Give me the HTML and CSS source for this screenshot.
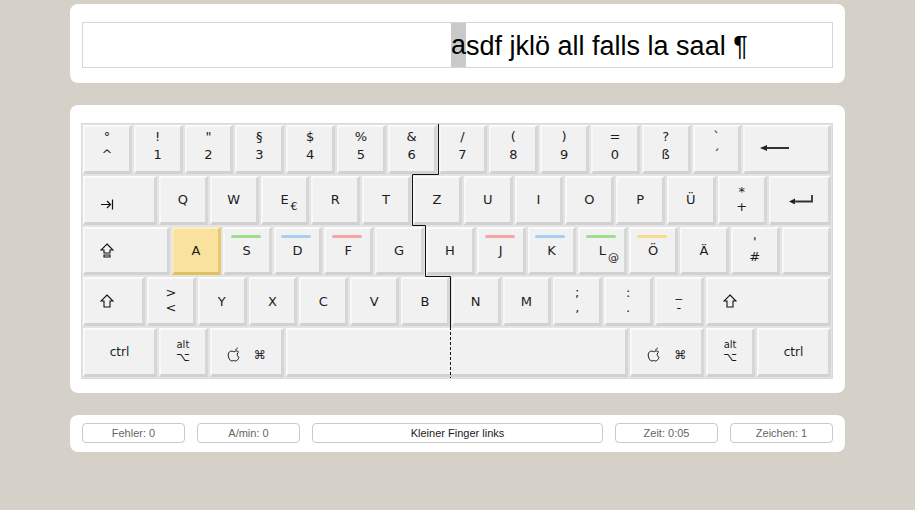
FILE: index.html
```html
<!doctype html>
<html lang="de">
 <head>
  <meta charset="UTF-8">
  <title>Tipptrainer</title>
  <link rel="stylesheet" href="styles.css">
 </head>
 <body>
  <div class="page">
   <div class="panel panel-text">
    <div class="textline"><span class="cur">a</span>sdf jklö all falls la saal ¶</div>
   </div>

   <div class="panel panel-kb">
    <div class="kb">
     <div class="row">
      <div class="key dbl num"><span>°</span><span>^</span></div>
      <div class="key dbl num"><span>!</span><span>1</span></div>
      <div class="key dbl num"><span>"</span><span>2</span></div>
      <div class="key dbl num"><span>§</span><span>3</span></div>
      <div class="key dbl num"><span>$</span><span>4</span></div>
      <div class="key dbl num"><span>%</span><span>5</span></div>
      <div class="key dbl num"><span>&amp;</span><span>6</span></div>
      <div class="key dbl num"><span>/</span><span>7</span></div>
      <div class="key dbl num"><span>(</span><span>8</span></div>
      <div class="key dbl num"><span>)</span><span>9</span></div>
      <div class="key dbl num"><span>=</span><span>0</span></div>
      <div class="key dbl num"><span>?</span><span>ß</span></div>
      <div class="key dbl num"><span>`</span><span>´</span></div>
      <div class="key grow k-back">
       <svg width="30" height="8" viewBox="0 0 30 8"><polygon points="0,4 7,1 7,7" fill="#222"/><line x1="6" y1="4" x2="29" y2="4" stroke="#333" stroke-width="2"/></svg>
      </div>
     </div>

     <div class="row">
      <div class="key w-tab k-tab">
       <svg width="14" height="12" viewBox="0 0 14 12"><path d="M1 6.5H11M7 3L10.5 6.5L7 10M12.5 1.5V11.5" fill="none" stroke="#111" stroke-width="1.2"/></svg>
      </div>
      <div class="key">Q</div>
      <div class="key">W</div>
      <div class="key"><span class="sub">E<small>€</small></span></div>
      <div class="key">R</div>
      <div class="key">T</div>
      <div class="key">Z</div>
      <div class="key">U</div>
      <div class="key">I</div>
      <div class="key">O</div>
      <div class="key">P</div>
      <div class="key">Ü</div>
      <div class="key dbl"><span>*</span><span>+</span></div>
      <div class="key grow k-enter">
       <svg width="25" height="10" viewBox="0 0 25 10"><polygon points="0,7.5 6,4.5 6,10.5" fill="#222"/><path d="M5 7.5H23V1" fill="none" stroke="#333" stroke-width="1.8"/></svg>
      </div>
     </div>

     <div class="row">
      <div class="key w-caps k-side">
       <svg width="14" height="15" viewBox="0 0 14 15"><path d="M7 1L13 7H10V10H4V7H1Z M4 12H10V14H4Z" fill="none" stroke="#111" stroke-width="1.1"/></svg>
      </div>
      <div class="key hl">A</div>
      <div class="key"><i class="bar green"></i>S</div>
      <div class="key"><i class="bar blue"></i>D</div>
      <div class="key"><i class="bar red"></i>F</div>
      <div class="key">G</div>
      <div class="key">H</div>
      <div class="key"><i class="bar red"></i>J</div>
      <div class="key"><i class="bar blue"></i>K</div>
      <div class="key"><i class="bar green"></i><span class="sub">L<small>@</small></span></div>
      <div class="key"><i class="bar yellow"></i>Ö</div>
      <div class="key">Ä</div>
      <div class="key dbl"><span>'</span><span>#</span></div>
      <div class="key grow"></div>
     </div>

     <div class="row">
      <div class="key w-shl k-side">
       <svg width="14" height="14" viewBox="0 0 14 14"><path d="M7 1L13 7H10V13H4V7H1Z" fill="none" stroke="#111" stroke-width="1.1"/></svg>
      </div>
      <div class="key dbl"><span>&gt;</span><span>&lt;</span></div>
      <div class="key">Y</div>
      <div class="key">X</div>
      <div class="key">C</div>
      <div class="key">V</div>
      <div class="key">B</div>
      <div class="key">N</div>
      <div class="key">M</div>
      <div class="key dbl"><span>;</span><span>,</span></div>
      <div class="key dbl"><span>:</span><span>.</span></div>
      <div class="key dbl"><span>_</span><span>-</span></div>
      <div class="key grow k-side">
       <svg width="14" height="14" viewBox="0 0 14 14"><path d="M7 1L13 7H10V13H4V7H1Z" fill="none" stroke="#111" stroke-width="1.1"/></svg>
      </div>
     </div>

     <div class="row">
      <div class="key w-mod small">ctrl</div>
      <div class="key alt"><span>alt</span><span>⌥</span></div>
      <div class="key w-mod cmd">
       <svg class="apple" width="13" height="15" viewBox="0 0 13 15"><path d="M8.6 3.4C8.9 2.2 9.8 1.3 10.8 1M6.4 4.6C5.2 3.8 1.2 3.6 1.2 8.2C1.2 11 3.2 14 4.7 14C5.7 14 6 13.5 6.7 13.5C7.4 13.5 7.7 14 8.7 14C10.2 14 11.6 11.6 12 10.3C10.8 9.7 10.2 8.6 10.2 7.5C10.2 6.2 10.9 5.4 11.6 5C10.6 3.8 9.2 3.8 8.4 4.2C7.7 4.5 7.1 4.9 6.4 4.6Z" fill="none" stroke="#111" stroke-width="1"/></svg>
       <span>⌘</span>
      </div>
      <div class="key grow"></div>
      <div class="key w-mod cmd">
       <svg class="apple" width="13" height="15" viewBox="0 0 13 15"><path d="M8.6 3.4C8.9 2.2 9.8 1.3 10.8 1M6.4 4.6C5.2 3.8 1.2 3.6 1.2 8.2C1.2 11 3.2 14 4.7 14C5.7 14 6 13.5 6.7 13.5C7.4 13.5 7.7 14 8.7 14C10.2 14 11.6 11.6 12 10.3C10.8 9.7 10.2 8.6 10.2 7.5C10.2 6.2 10.9 5.4 11.6 5C10.6 3.8 9.2 3.8 8.4 4.2C7.7 4.5 7.1 4.9 6.4 4.6Z" fill="none" stroke="#111" stroke-width="1"/></svg>
       <span>⌘</span>
      </div>
      <div class="key alt"><span>alt</span><span>⌥</span></div>
      <div class="key w-mod small">ctrl</div>
     </div>

     <svg class="divider" width="750" height="254" viewBox="0 0 750 254">
      <path d="M356.5 0V50.5H330.5V101.5H343.5V152.5H368.5V203" fill="none" stroke="#111" stroke-width="1"/>
      <path d="M368.5 203V254" fill="none" stroke="#111" stroke-width="1" stroke-dasharray="3 2"/>
     </svg>
    </div>
   </div>

   <div class="panel panel-status">
    <div class="stat">Fehler: 0</div>
    <div class="stat">A/min: 0</div>
    <div class="stat stat-main">Kleiner Finger links</div>
    <div class="stat">Zeit: 0:05</div>
    <div class="stat">Zeichen: 1</div>
   </div>
  </div>
 </body>
</html>
```

FILE: styles.css
```css
*{
	padding:0;
	margin:0;
	box-sizing:border-box;
}
body{
	background:#d5d1c9;
	font-family:"DejaVu Sans",sans-serif;
}
.page{
	width:775px;
	margin:4px auto 0;
	display:flex;
	flex-direction:column;
	gap:22px;
}
.panel{
	background:#fff;
	border-radius:8px;
}

/* text line */
.panel-text{
	padding:18px 12px 15px 12px;
}
.textline{
	height:46px;
	border:1px solid #d6d6d6;
	padding-left:368px;
	font-family:"Liberation Sans",Arial,sans-serif;
	font-size:27px;
	line-height:46px;
	color:#000;
	white-space:pre;
	overflow:hidden;
}
.textline .cur{
	display:inline-block;
	height:44px;
	line-height:44px;
	vertical-align:top;
	background:#c9c9c9;
}

/* keyboard */
.panel-kb{
	padding:18px 12px 14px 11px;
}
.kb{
	position:relative;
	border:1px solid #d9d9d9;
	background:#e4e4e4;
	padding:1px;
	display:flex;
	flex-direction:column;
	gap:2px;
}
.row{
	display:flex;
	gap:2px;
	height:48.8px;
}
.key{
	position:relative;
	flex:none;
	width:48.8px;
	border-style:solid;
	border-width:2px 3px 3px 2px;
	border-color:#fbfbfb #d6d6d6 #d1d1d1 #f8f8f8;
	background:#f1f1f1;
	display:flex;
	align-items:center;
	justify-content:center;
	font-size:13px;
	color:#1c1c1c;
}
.key.grow{
	flex:1;
	width:auto;
}
.w-tab{ width:74px; }
.w-caps{ width:87px; }
.w-shl{ width:62px; }
.w-mod{ width:74px; }

.k-side{
	justify-content:flex-start;
	padding-left:15px;
}
.k-tab{
	justify-content:flex-start;
	padding-left:15px;
	padding-top:9px;
}
.k-back{
	justify-content:flex-start;
	padding-left:15px;
	padding-bottom:2px;
}
.k-enter{
	padding-left:4px;
	padding-bottom:2px;
}

.dbl{
	flex-direction:column;
	line-height:15px;
	padding-bottom:2px;
}
.dbl.num{
	line-height:18px;
	padding-bottom:6px;
}

.sub{
	position:relative;
}
.sub small{
	position:absolute;
	left:100%;
	top:8px;
	margin-left:2px;
	font-size:11px;
}

.hl{
	background:#f8e29d;
	border-color:#fcefc6 #e6c86e #dfc062 #fbecbd;
}

.bar{
	position:absolute;
	top:6px;
	left:50%;
	width:30px;
	height:3px;
	margin-left:-16px;
	border-radius:2px;
}
.bar.green{ background:#9ddf8b; }
.bar.blue{ background:#a7cff4; }
.bar.red{ background:#f4a5a5; }
.bar.yellow{ background:#f6dc8c; }

.small{
	font-size:12px;
}
.alt{
	flex-direction:column;
	font-size:10px;
	line-height:13px;
	padding-bottom:2px;
}
.alt span:last-child{
	font-size:12px;
}
.cmd{
	gap:14px;
	padding-top:5px;
	font-size:12px;
}

.divider{
	position:absolute;
	left:0;
	top:0;
	pointer-events:none;
}

/* status */
.panel-status{
	display:flex;
	gap:12px;
	padding:8px 12px 9px 12px;
}
.stat{
	width:103px;
	height:20px;
	border:1px solid #c9c9c9;
	border-radius:4px;
	font-family:"Liberation Sans",Arial,sans-serif;
	font-size:11px;
	line-height:18px;
	text-align:center;
	color:#666;
}
.stat-main{
	flex:1;
	color:#1a1a1a;
}
```
